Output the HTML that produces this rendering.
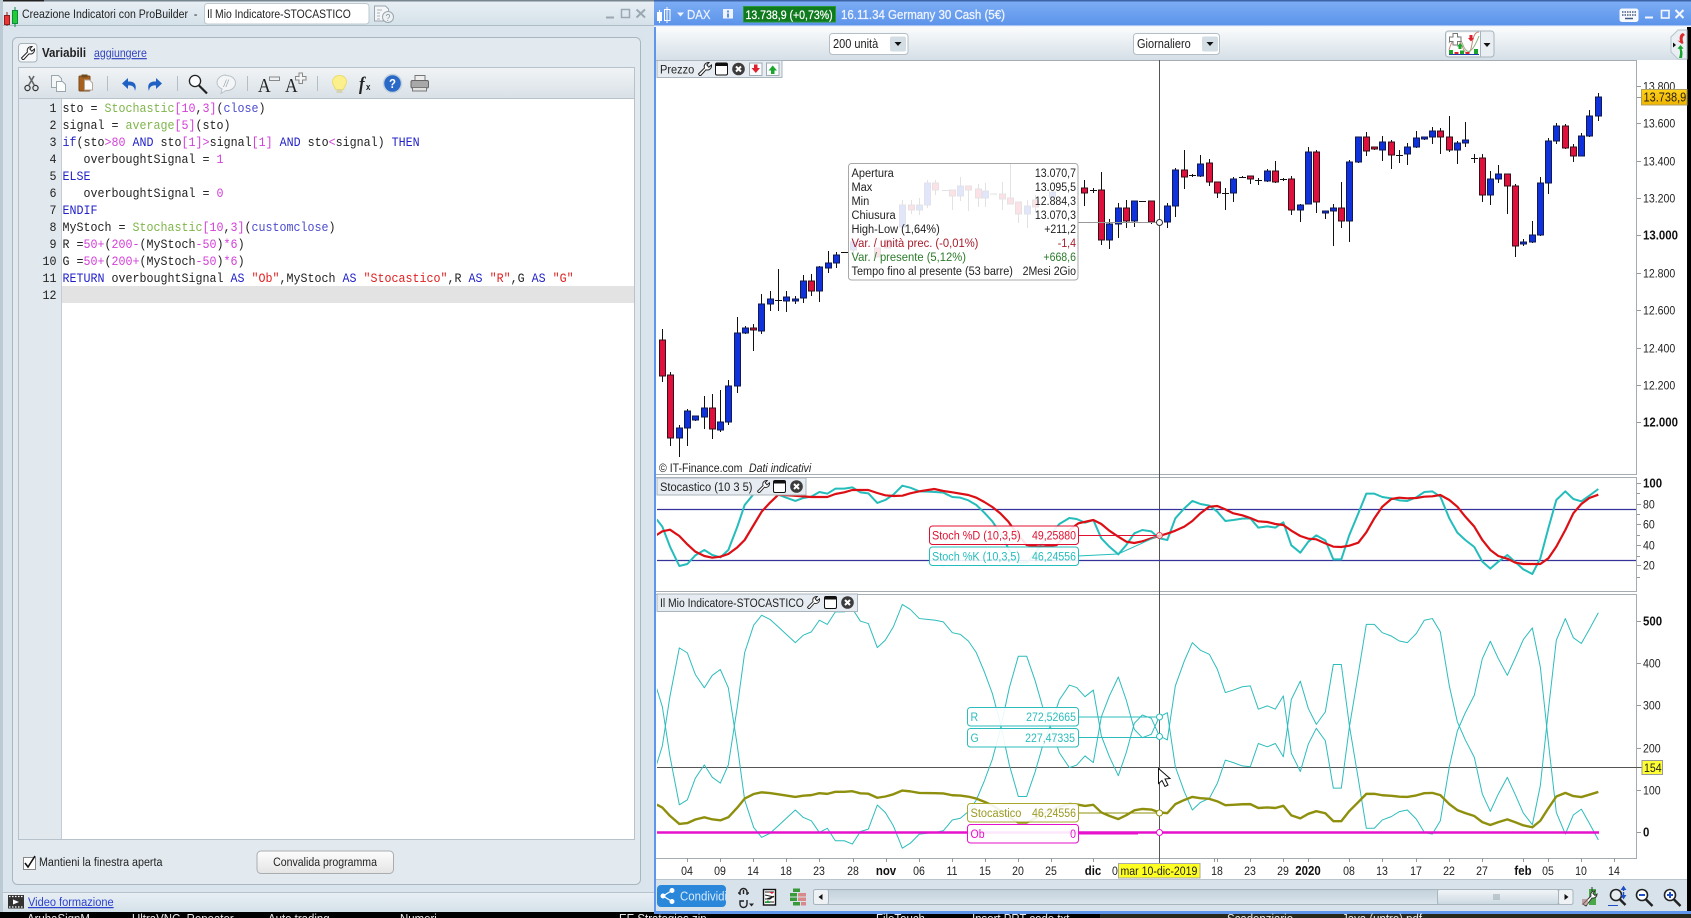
<!DOCTYPE html>
<html><head><meta charset="utf-8"><title>ProBuilder</title>
<style>
html,body{margin:0;padding:0;background:#000;width:1691px;height:918px;overflow:hidden}
svg{display:block}
text{font-family:"Liberation Sans",sans-serif;font-size:12px;fill:#222;transform-box:fill-box;transform-origin:0 50%;transform:scaleX(.88);white-space:pre}
text.c{text-anchor:middle;transform-origin:50% 50%}
text.r{text-anchor:end;transform-origin:100% 50%}
text.bd{font-weight:bold;font-size:13px;fill:#111}
text.m{font-family:"Liberation Mono",monospace;font-size:13px;transform:scaleX(.898)}
text.w{fill:#eef3fd;font-size:12.5px;stroke:#eef3fd;stroke-width:.2}
text.l{transform:scaleX(.92)}
text.v2{transform:scaleX(.935)}
text.u{transform:scaleX(.865)}
.g{fill:#7fb54a}.p{fill:#d33fd8}.v{fill:#4d4dd0}.k{fill:#2222c8}.s{fill:#e02020}
#k,#d{vector-effect:non-scaling-stroke;fill:none;stroke-linejoin:round}
.lab{fill:#fff;fill-opacity:.9;stroke-width:1}
.ic{fill:none;stroke:#333;stroke-width:1.2}
</style></head><body>
<svg xmlns="http://www.w3.org/2000/svg" width="1691" height="918" viewBox="0 0 1691 918">
<defs>
<linearGradient id="tb" x1="0" y1="0" x2="0" y2="1"><stop offset="0" stop-color="#fbfcfd"/><stop offset="1" stop-color="#d5dfe7"/></linearGradient>
<linearGradient id="ltb" x1="0" y1="0" x2="0" y2="1"><stop offset="0" stop-color="#f1f4f6"/><stop offset="1" stop-color="#d9e1e7"/></linearGradient>
<linearGradient id="blue" x1="0" y1="0" x2="0" y2="1"><stop offset="0" stop-color="#7eaef5"/><stop offset="1" stop-color="#5b93ea"/></linearGradient>
<linearGradient id="ttl" x1="0" y1="0" x2="0" y2="1"><stop offset="0" stop-color="#e9f0f5"/><stop offset="1" stop-color="#d5e1e9"/></linearGradient>
<linearGradient id="gold" x1="0" y1="0" x2="0" y2="1"><stop offset="0" stop-color="#ffd21c"/><stop offset="1" stop-color="#eeb400"/></linearGradient>
<linearGradient id="btn" x1="0" y1="0" x2="0" y2="1"><stop offset="0" stop-color="#fdfdfd"/><stop offset="1" stop-color="#e4e4e4"/></linearGradient>
<linearGradient id="trk" x1="0" y1="0" x2="0" y2="1"><stop offset="0" stop-color="#c3d1db"/><stop offset="1" stop-color="#dbe5ec"/></linearGradient>
<linearGradient id="thm" x1="0" y1="0" x2="0" y2="1"><stop offset="0" stop-color="#f3f6f8"/><stop offset="1" stop-color="#cbd8e1"/></linearGradient>
<clipPath id="cp"><rect x="657" y="60" width="979" height="798"/></clipPath>
<clipPath id="cs"><rect x="657" y="478" width="979" height="113"/></clipPath>
<clipPath id="cm"><rect x="657" y="594" width="979" height="264"/></clipPath>
<symbol id="wr" viewBox="0 0 14 14" overflow="visible"><path d="M1.5 13.5L.5 12L6.5 6C5.5 3 7.5.5 11 .5L8.8 3L10.8 5.2L13.5 3C13.8 6.5 11 8.8 8 7.8L2.8 13.5Z" fill="#fff" stroke="#222" stroke-width="1"/></symbol>
<symbol id="win" viewBox="0 0 13 13"><rect x=".5" y=".5" width="12" height="12" rx="1.5" fill="#fff" stroke="#111"/><rect x=".5" y=".5" width="12" height="3" fill="#111"/></symbol>
<symbol id="cl" viewBox="0 0 13 13"><circle cx="6.5" cy="6.5" r="6.3" fill="#3c3c3c"/><path d="M4 4L9 9M9 4L4 9" stroke="#fff" stroke-width="2"/></symbol>
<polyline id="k" points="20,598 37,620 60,680 88,738 112,732 136,706 163,690 187,705 211,712 235,690 262,620 284,555 311,522 335,510 360,515 385,524 409,533 436,543 460,534 484,530 508,516 532,521 556,506 583,506 607,502 631,517 655,520 682,549 706,540 730,524 757,497 781,503 808,514 832,515 856,516 880,518 907,531 931,533 955,541 979,555 1003,578 1027,604 1051,640 1078,690 1105,728 1130,728 1155,699 1178,667 1204,640 1228,612 1258,594 1280,597 1305,608 1330,600 1354,655 1378,680 1405,703 1429,675 1453,640 1477,630 1504,634 1528,655 1552,660 1576,595 1603,565 1627,543 1651,552 1678,557 1702,575 1726,603 1750,600 1777,596 1801,595 1825,623 1852,619 1876,623 1900,607 1924,676 1951,698 1975,665 1999,646 2026,661 2050,718 2074,718 2098,645 2125,580 2149,521 2173,521 2197,531 2224,535 2248,541 2272,543 2299,532 2323,516 2347,514 2371,530 2398,595 2422,638 2446,660 2473,681 2497,725 2521,746 2545,725 2572,705 2596,726 2620,748 2647,762 2671,715 2695,625 2719,540 2746,514 2770,537 2794,544 2818,527 2845,507"/>
<polyline id="d" points="20,645 37,634 60,629 88,648 112,673 136,695 163,708 187,713 211,710 235,702 262,682 284,660 311,615 335,575 360,548 385,524 430,527 484,531 532,531 556,522 583,517 607,510 655,510 682,519 706,526 730,528 757,527 781,520 808,514 853,507 880,513 907,517 955,525 979,533 1003,546 1027,561 1051,580 1075,605 1100,640 1130,675 1172,680 1220,675 1258,630 1285,610 1330,600 1354,612 1378,632 1405,650 1429,665 1453,669 1477,664 1504,655 1528,648 1560,638 1576,632 1603,620 1627,603 1651,580 1678,560 1702,558 1726,568 1750,580 1777,586 1801,594 1825,604 1852,606 1876,612 1900,615 1924,632 1951,648 1975,656 1999,658 2026,670 2050,680 2074,681 2098,677 2125,668 2149,637 2173,595 2197,560 2224,537 2248,533 2272,535 2299,534 2323,530 2347,529 2371,525 2398,540 2422,560 2446,590 2473,620 2497,660 2521,690 2545,708 2572,716 2596,728 2620,732 2647,732 2671,732 2695,715 2719,680 2746,630 2770,580 2794,552 2818,534 2845,524"/>
</defs>

<rect width="1691" height="918" fill="#000"/>
<rect x="1100" y="912" width="591" height="6" fill="#26281c"/>

<!-- LEFT WINDOW -->
<rect x="0" y="0" width="654" height="912" fill="#d9e4ec"/>
<rect x="0" y="0" width="654" height="25" fill="url(#ttl)"/>
<rect x="0" y="0" width="654" height="1.5" fill="#77858f"/>
<rect x="0" y="0" width="44" height="1.5" fill="#222"/>
<rect x="0" y="25" width="654" height="1" fill="#aebcc6"/>
<rect x="0" y="0" width="3" height="912" fill="#bccad4"/>
<path d="M7 12v14" stroke="#822"/>
<path d="M4.500 15.500h5v9h-5z" fill="#e33" stroke="#822"/>
<path d="M15 7v20" stroke="#184"/>
<path d="M12.500 10.500h5v13h-5z" fill="#2c3" stroke="#184"/>
<text x="22" y="18">Creazione Indicatori con ProBuilder  -</text>
<rect x="204.5" y="3.5" width="164.5" height="20.5" rx="3" fill="#fff" stroke="#bcc8d0"/>
<text x="207" y="18" class="u">Il Mio Indicatore-STOCASTICO</text>
<path d="M374.5 6h11l3 3v12h-14z" fill="#f4f6f8" stroke="#9aa6ae"/>
<path d="M377 10h5M377 13h3M377 16h3M377 19h3" stroke="#a8b3ba"/>
<circle cx="388" cy="17" r="5.5" fill="#eef2f5" stroke="#9aa6ae"/>
<text x="388" y="21" class="c" style="font-size:10px;fill:#8a98a2">?</text>
<path d="M606 17.5h8" stroke="#9aa8b2" stroke-width="2"/>
<rect x="621.5" y="9.5" width="8" height="8" fill="none" stroke="#9aa8b2" stroke-width="1.5"/>
<path d="M636.5 9.5l8.5 8M645 9.5l-8.5 8" stroke="#9aa8b2" stroke-width="2"/>

<rect x="12.5" y="37.5" width="628" height="847" rx="5" fill="#e2eaf0" stroke="#a9b6c0"/>
<rect x="18.5" y="43.5" width="18.5" height="18.5" rx="3" fill="#f6f8f9" stroke="#a6b2ba"/>
<use href="#wr" x="21" y="46" width="14" height="14"/>
<text x="42" y="57" class="l" style="font-weight:bold;font-size:12.5px">Variabili</text>
<text x="94" y="57" style="fill:#3344bb;text-decoration:underline">aggiungere</text>

<rect x="18.5" y="67.5" width="616" height="31" fill="url(#ltb)" stroke="#b7c2ca"/>
<!-- toolbar icons -->
<g>
<circle cx="27.5" cy="88" r="2.6" fill="none" stroke="#333" stroke-width="1.2"/><circle cx="35.5" cy="88" r="2.6" fill="none" stroke="#333" stroke-width="1.2"/>
<path d="M28.5 85.5L34 76M34.5 85.5L29 76" stroke="#666" stroke-width="1.6"/>
<path d="M51.5 75.5h7l3 3v9h-10z" fill="#f4f6f8" stroke="#9ba6ad"/><path d="M56.5 81.5h6l3 3v7h-9z" fill="#fbfcfc" stroke="#9ba6ad"/>
<rect x="79" y="76" width="11" height="15" rx="1" fill="#a8621f" stroke="#7d4a18"/><rect x="81.5" y="74.5" width="6" height="3" fill="#6e4a20"/><path d="M84.5 80h5l3 3v7h-8z" fill="#fdfdfd" stroke="#b3a898"/>
<path d="M107.5 76v15M177.5 76v15M247.5 76v15M317.5 76v15" stroke="#b5bec5"/>
<path d="M135 91c2-6 0-10-7-9.500v-3.500l-6 5.500l6 5.500v-3.500c4-.5 6.500 1 7 5.500z" fill="#1f62c4"/>
<path d="M149 91c-2-6 0-10 7-9.500v-3.500l6 5.500l-6 5.500v-3.500c-4-.5-6.500 1-7 5.500z" fill="#1f62c4"/>
<circle cx="195" cy="81" r="5.600" fill="#fbfdfe" stroke="#222" stroke-width="1.300"/><path d="M199 85.500l8 8" stroke="#222" stroke-width="2.200"/>
<path d="M226 75.500c6 0 9.500 3.500 9.500 7.500s-4 8-9.500 7.500l-5 3l1-4.500c-3-1.500-5-4-5-6.500c0-4 4-7.500 8.500-7.500z" fill="#f3f5f6" stroke="#b9c2c8"/>
<text x="226" y="87" class="c" style="font-size:10px;font-style:italic;fill:#9aa5ad">//</text>
<text x="258" y="92" style="font-family:'Liberation Serif',serif;font-size:20px">A</text>
<rect x="269.500" y="77" width="10" height="3.500" fill="#eef1f3" stroke="#888"/>
<text x="285" y="92" style="font-family:'Liberation Serif',serif;font-size:20px">A</text>
<path d="M299 73h3.500v3.500h3.500v3.500h-3.500v3.500h-3.500v-3.500h-3.500v-3.500h3.500z" fill="#f2f4f5" stroke="#888"/>
<path d="M339.500 75.500c4.500 0 7 3 7 6.500c0 3-2.500 4.500-3 7.500h-8c-.5-3-3-4.500-3-7.500c0-3.500 2.500-6.500 7-6.500z" fill="#fbf08c" stroke="#ecdc6c"/><rect x="336.500" y="89.500" width="6" height="3.500" fill="#d6d2b4"/>
<text x="359" y="90" style="font-family:'Liberation Serif',serif;font-size:19px;font-style:italic;font-weight:bold;fill:#222">f</text>
<text x="366" y="90" style="font-size:9px;font-weight:bold">x</text>
<circle cx="392.500" cy="83.500" r="9" fill="#2a69c8" stroke="#c3d2dd" stroke-width="1.500"/>
<text x="392.500" y="88" class="c" style="font-size:13px;font-weight:bold;fill:#fff">?</text>
<rect x="415" y="75.500" width="10" height="5" fill="#eee" stroke="#777"/><rect x="411" y="80.500" width="17.500" height="7.500" rx="1.500" fill="#a8a8a8" stroke="#666"/><rect x="412.500" y="87.500" width="14" height="3.500" fill="#e2e2e2" stroke="#777"/>
</g>

<!-- editor -->
<rect x="18.500" y="98.500" width="616" height="741" fill="#fff" stroke="#b7c2ca"/>
<rect x="19" y="99" width="42.500" height="740" fill="#e1e9ef"/>
<path d="M61.500 99v740" stroke="#c3cdd5"/>
<rect x="62" y="286" width="572" height="17" fill="#e3e3e3"/>
<g>
<text class="m r" x="56.500" y="112">1</text><text class="m r" x="56.500" y="129">2</text><text class="m r" x="56.500" y="146">3</text><text class="m r" x="56.500" y="163">4</text><text class="m r" x="56.500" y="180">5</text><text class="m r" x="56.500" y="197">6</text><text class="m r" x="56.500" y="214">7</text><text class="m r" x="56.500" y="231">8</text><text class="m r" x="56.500" y="248">9</text><text class="m r" x="56.500" y="265">10</text><text class="m r" x="56.500" y="282">11</text><text class="m r" x="56.500" y="299">12</text>
<text class="m" x="62.500" y="112" xml:space="preserve">sto = <tspan class="g">Stochastic</tspan><tspan class="p">[10</tspan>,<tspan class="p">3]</tspan>(<tspan class="v">close</tspan>)</text>
<text class="m" x="62.500" y="129" xml:space="preserve">signal = <tspan class="g">average</tspan><tspan class="p">[5]</tspan>(sto)</text>
<text class="m" x="62.500" y="146" xml:space="preserve"><tspan class="k">if</tspan>(sto<tspan class="p">&gt;80</tspan> <tspan class="k">AND</tspan> sto<tspan class="p">[1]</tspan><tspan class="p">&gt;</tspan>signal<tspan class="p">[1]</tspan> <tspan class="k">AND</tspan> sto<tspan class="p">&lt;</tspan>signal) <tspan class="k">THEN</tspan></text>
<text class="m" x="62.500" y="163" xml:space="preserve">   overboughtSignal = <tspan class="p">1</tspan></text>
<text class="m" x="62.500" y="180" xml:space="preserve"><tspan class="k">ELSE</tspan></text>
<text class="m" x="62.500" y="197" xml:space="preserve">   overboughtSignal = <tspan class="p">0</tspan></text>
<text class="m" x="62.500" y="214" xml:space="preserve"><tspan class="k">ENDIF</tspan></text>
<text class="m" x="62.500" y="231" xml:space="preserve">MyStoch = <tspan class="g">Stochastic</tspan><tspan class="p">[10</tspan>,<tspan class="p">3]</tspan>(<tspan class="v">customclose</tspan>)</text>
<text class="m" x="62.500" y="248" xml:space="preserve">R =<tspan class="p">50+</tspan>(<tspan class="p">200-</tspan>(MyStoch<tspan class="p">-50</tspan>)<tspan class="p">*6</tspan>)</text>
<text class="m" x="62.500" y="265" xml:space="preserve">G =<tspan class="p">50+</tspan>(<tspan class="p">200+</tspan>(MyStoch<tspan class="p">-50</tspan>)<tspan class="p">*6</tspan>)</text>
<text class="m" x="62.500" y="282" xml:space="preserve"><tspan class="k">RETURN</tspan> overboughtSignal <tspan class="k">AS</tspan> <tspan class="s">"Ob"</tspan>,MyStoch <tspan class="k">AS</tspan> <tspan class="s">"Stocastico"</tspan>,R <tspan class="k">AS</tspan> <tspan class="s">"R"</tspan>,G <tspan class="k">AS</tspan> <tspan class="s">"G"</tspan></text>
</g>

<!-- bottom of left window -->
<rect x="23.500" y="857.500" width="12" height="12" fill="#fff" stroke="#888"/>
<path d="M25 863l3 4l7-11" fill="none" stroke="#111" stroke-width="1.600"/>
<text x="39" y="866" style="transform:scaleX(.895)">Mantieni la finestra aperta</text>
<rect x="257" y="851" width="136.500" height="22.500" rx="4" fill="url(#btn)" stroke="#a9adb0"/>
<text x="325" y="866" class="c">Convalida programma</text>
<rect x="3" y="892" width="651" height="20" fill="url(#ttl)"/>
<path d="M3 892.500h651" stroke="#b5c2cb"/>
<rect x="8" y="895" width="16" height="13.500" fill="#333"/>
<path d="M9 896.500h14M9 907h14" stroke="#fff" stroke-width="1.300" stroke-dasharray="1.500 1.500"/>
<path d="M13 899.500l6 2.500l-6 2.500z" fill="#fff"/>
<text x="28" y="906" class="l" style="fill:#2a3fcf;text-decoration:underline">Video formazione</text>

<!-- RIGHT WINDOW -->
<rect x="654" y="0" width="37" height="914" fill="#5f95ea"/>
<rect x="654" y="0" width="1037" height="26" fill="url(#blue)"/>
<rect x="654" y="0" width="1037" height="1.500" fill="#3c64a6"/>
<rect x="654" y="25.500" width="1037" height="1.500" fill="#eef4fc"/>
<rect x="656" y="27" width="1031" height="33" fill="url(#tb)"/>
<rect x="656" y="60" width="1031" height="798" fill="#fff"/>
<rect x="656" y="858" width="1031" height="21" fill="#fff"/>
<rect x="656" y="879" width="1031" height="32" fill="#d7e2eb"/>
<rect x="654" y="911" width="1037" height="3" fill="#5f95ea"/>
<path d="M656 879.500h1031" stroke="#b8c5cf"/>

<!-- title content -->
<rect x="657" y="12" width="5" height="9" fill="#fff"/><path d="M659.500 10v13" stroke="#fff"/>
<rect x="664.500" y="9.500" width="5.500" height="11" fill="none" stroke="#fff"/><path d="M667 7v16" stroke="#fff"/>
<path d="M677 12.500h7l-3.500 4z" fill="#eef3fd"/>
<text x="687" y="19" class="w" style="font-size:13px">DAX</text>
<rect x="723" y="9" width="10" height="9.500" fill="#eef3fd"/><rect x="727" y="10.500" width="2" height="2" fill="#5b8edd"/><rect x="727" y="13.500" width="2" height="4" fill="#5b8edd"/>
<rect x="743.500" y="6.500" width="92" height="15.500" fill="#0f7a1e" stroke="#2a9a36"/>
<text x="745.500" y="19" style="fill:#fff;stroke:#fff;stroke-width:.25;font-size:12px">13.738,9 (+0,73%)</text>
<text x="841" y="19" class="w" style="transform:scaleX(.92);stroke-width:.3">16.11.34 Germany 30 Cash (5€)</text>
<rect x="1619.500" y="8.500" width="19" height="13.500" rx="2.500" fill="#f6f9fd"/>
<path d="M1622 12h14M1622 15h14" stroke="#445a7d" stroke-width="1.500" stroke-dasharray="1.500 1"/><path d="M1625 18.500h8" stroke="#445a7d" stroke-width="1.500"/>
<path d="M1645 17.500h8" stroke="#f2f6fe" stroke-width="2"/>
<rect x="1661.500" y="10.500" width="7.500" height="7.500" fill="none" stroke="#f2f6fe" stroke-width="1.600"/>
<path d="M1675.500 10l8 8M1683.500 10l-8 8" stroke="#f2f6fe" stroke-width="2"/>

<!-- selects -->
<rect x="829.500" y="33.500" width="78.500" height="21" rx="3" fill="#fff" stroke="#b3bec6"/>
<rect x="890" y="36.500" width="16" height="15" rx="2" fill="#d3dde4"/>
<path d="M894.500 42h7l-3.500 4z" fill="#111"/>
<text x="833" y="48" style="font-size:12.500px">200 unità</text>
<rect x="1133.500" y="33.500" width="86" height="21" rx="3" fill="#fff" stroke="#b3bec6"/>
<rect x="1202" y="36.500" width="16" height="15" rx="2" fill="#d3dde4"/>
<path d="M1206.500 42h7l-3.500 4z" fill="#111"/>
<text x="1137" y="48" style="font-size:12.500px">Giornaliero</text>

<!-- indicator button -->
<rect x="1445.500" y="31" width="48.500" height="26" rx="3" fill="#e9eef2" stroke="#a7b4bd"/>
<rect x="1447" y="32.500" width="33" height="23" fill="#fff"/>
<path d="M1480.500 31v26" stroke="#a7b4bd"/>
<path d="M1449 50c4-14 9-14 13-4s8 10 10-2s5-12 7-12" fill="none" stroke="#c98a7a" stroke-width="1"/>
<path d="M1449 43c6-12 10-8 14 2s9 9 16-9" fill="none" stroke="#8ab07a" stroke-width="1"/>
<path d="M1449.500 37h3.500v-3.500h4.500v3.500h3.500v4.500h-3.500v3.500h-4.500v-3.500h-3.500z" fill="#fff" stroke="#777"/>
<path d="M1458.500 49v-2.500h-1.500l3-3.500l3 3.500h-1.500v2.500z" fill="#1ca52c"/>
<path d="M1469.500 35v3h-1.500l3 3.500l3-3.500h-1.500v-3z" fill="#dd2030"/>
<path d="M1449 54.500h30" stroke="#1c3fa8"/>
<rect x="1449" y="50" width="4" height="4" fill="#1ca52c"/><rect x="1454.500" y="52" width="4" height="2" fill="#dd2030"/><rect x="1460" y="50.500" width="4" height="3.500" fill="#1ca52c"/><rect x="1465.500" y="52" width="4" height="2" fill="#dd2030"/><rect x="1474" y="49" width="4" height="5" fill="#1ca52c"/>
<path d="M1483.500 43h7l-3.500 4z" fill="#111"/>
<!-- right tab -->
<path d="M1687 30h-9l-7 7v15l7 7h9z" fill="#e9eff3" stroke="#b7c3cb"/>
<path d="M1677 45l-3-2.500v5z" fill="#111" transform="translate(-1 -0)"/>
<path d="M1683 33c-3 1-4 4-3 8l-2.500-.5l4.500 3.500l1.500-1c-1.500-4-1-7 1.500-8z" fill="#dd2a2a"/>
<path d="M1682 58c.5-3 1-6-.5-9l2-.5l-3-3.500l-3 3.500l2 .5c1 3 .5 6-.5 9z" fill="#1aa52c"/>

<!-- candles -->
<g clip-path="url(#cp)">
<path stroke="#111" stroke-width="1" fill="none" d="M662.500 329V382M670.500 372V446M679.500 425V457M687.500 409V446M695.500 416V421M704.500 396V429M712.500 394V439M720.500 390V432M728.500 380V425M737.500 317V393M745.500 326V334M753.500 324V351M761.500 294V334M770.500 291V311M778.500 269V311M786.500 291V312M795.500 296V304M803.500 275V303M811.500 274V296M819.500 266V302M828.500 251V273M836.500 252V268
M853.500 240V255M902.500 200V232M911.500 200V214M919.500 198V215M927.500 180V208M935.500 180V195M952.500 190V210M960.500 177V201M968.500 186V211M978.500 184V207M985.500 183V207M1002.500 182V210M1010.500 163V203M1018.500 202V223M1027.500 200V228M1035.500 195V212
M1084.500 180V206M1093.500 188V193M1101.500 172V245M1109.500 219V249M1118.500 203V238M1126.500 200V228M1134.500 201V227M1151.500 201V224M1159.500 222V257M1167.500 203V228M1175.500 168V217M1184.500 150V189M1192.500 174V177M1200.500 155V177M1209.500 159V186M1217.500 182V198M1225.500 188V210M1233.500 177V202M1242.500 176V178M1250.500 176V184M1258.500 178V185M1267.500 169V182M1275.500 161V183M1283.500 178V181M1291.500 176V215M1300.500 204V222M1308.500 147V204M1316.500 150V213M1325.500 211V219M1333.500 204V246M1341.500 182V228M1349.500 160V242M1358.500 137V163M1366.500 132V156M1374.500 147V150M1382.500 136V161M1391.500 140V169M1399.500 150V163M1407.500 143V165M1416.500 131V148M1424.500 137V140M1432.500 127V144M1440.500 128V154M1449.500 116V152M1457.500 141V164M1465.500 122V147M1474.500 154V163M1482.500 154V202M1490.500 171V205M1498.500 165V183M1507.500 174V214M1515.500 184V257M1523.500 239V246M1532.500 221V243M1540.500 177V236M1548.500 138V194M1556.500 123V144M1565.500 124V149M1573.500 144V162M1581.500 133V156M1589.500 110V137M1598.500 93V121
M775 300.500h7M841 252.500h7M942 190.500h7M990 194h7M1090 190.500h7M1139 201.500h7M1189 175.500h7M1222 193.500h7M1239 177.500h7M1255 180.500h7M1280 179.500h7M1396 155.500h7M1471 158.500h7"/>
<path fill="#0f32dc" stroke="#121a50" stroke-width="1" d="M676.500 428h6v10h-6zM684.500 411h6v17h-6zM692.500 416h6v4h-6zM701.500 408h6v9h-6zM717.500 422h6v8h-6zM725.500 386h6v36h-6zM734.500 333h6v53h-6zM742.500 328h6v5h-6zM758.500 304h6v27h-6zM767.500 299h6v5h-6zM783.500 297h6v4h-6zM792.500 299h6v2h-6zM800.500 281h6v17h-6zM816.500 267h6v24h-6zM825.500 263h6v5h-6zM833.500 255h6v8h-6zM850.500 242h6v8h-6zM899.500 205h6v22h-6zM916.500 205h6v5h-6zM924.500 183h6v22h-6zM957.500 186h6v10h-6zM982.500 191h6v7h-6zM1024.500 206h6v8h-6zM1049.500 192h6v5h-6zM1106.500 224h6v16h-6zM1115.500 208h6v16h-6zM1131.500 201h6v20h-6zM1164.500 206h6v16h-6zM1172.500 170h6v36h-6zM1197.500 164h6v12h-6zM1230.500 179h6v14h-6zM1264.500 171h6v10h-6zM1297.500 205h6v5h-6zM1305.500 152h6v52h-6zM1322.500 211h6v2h-6zM1330.500 208h6v3h-6zM1346.500 162h6v59h-6zM1355.500 137h6v25h-6zM1379.500 142h6v8h-6zM1404.500 147h6v7h-6zM1413.500 138h6v9h-6zM1421.500 137h6v2h-6zM1429.500 131h6v6h-6zM1454.500 143h6v7h-6zM1462.500 140h6v3h-6zM1487.500 179h6v16h-6zM1495.500 174h6v5h-6zM1520.500 242h6v2h-6zM1529.500 235h6v7h-6zM1537.500 183h6v52h-6zM1545.500 141h6v42h-6zM1553.500 126h6v15h-6zM1578.500 136h6v20h-6zM1586.500 116h6v20h-6zM1595.500 97h6v19h-6z"/>
<path fill="#e0103c" stroke="#33101a" stroke-width="1" d="M659.500 340h6v36h-6zM667.500 375h6v63h-6zM709.500 408h6v21h-6zM750.500 328h6v2h-6zM808.500 281h6v10h-6zM874.500 248h6v9h-6zM884.500 240h6v8h-6zM908.500 205h6v5h-6zM932.500 183h6v7h-6zM949.500 190h6v6h-6zM965.500 186h6v4h-6zM975.500 189h6v9h-6zM999.500 194h6v5h-6zM1007.500 198h6v6h-6zM1015.500 202h6v12h-6zM1032.500 200h6v7h-6zM1081.500 188h6v5h-6zM1098.500 190h6v50h-6zM1123.500 208h6v13h-6zM1148.500 201h6v21h-6zM1181.500 170h6v7h-6zM1206.500 163h6v19h-6zM1214.500 182h6v11h-6zM1247.500 176h6v3h-6zM1272.500 171h6v11h-6zM1288.500 179h6v31h-6zM1313.500 152h6v50h-6zM1338.500 208h6v13h-6zM1363.500 137h6v14h-6zM1371.500 147h6v2h-6zM1388.500 142h6v13h-6zM1437.500 131h6v6h-6zM1446.500 137h6v13h-6zM1479.500 158h6v37h-6zM1504.500 174h6v12h-6zM1512.500 186h6v60h-6zM1562.500 126h6v22h-6zM1570.500 147h6v9h-6z"/>
</g>

<!-- pane separators & axes -->
<path d="M656 60.500h981M656 474.500h981M656 477.500h981M656 591.500h981M656 594.500h981M656 858.500h981" stroke="#a5adb3" fill="none"/>
<path d="M1636.500 60v798" stroke="#a5adb3"/>
<rect x="656" y="475" width="981" height="2" fill="#fff"/>
<rect x="656" y="592" width="981" height="2" fill="#fff"/>
<!-- ticks -->
<path stroke="#999" fill="none" d="M1637 86.500h4M1637 123.500h4M1637 161.500h4M1637 198.500h4M1637 235.500h4M1637 273.500h4M1637 310.500h4M1637 348.500h4M1637 385.500h4M1637 422.500h4M1637 97.500h4
M1637 483.500h4M1637 493.500h3M1637 504.500h4M1637 514.500h3M1637 524.500h4M1637 535.500h3M1637 545.500h4M1637 556.500h3M1637 565.500h4M1637 577.500h3
M1637 621.500h4M1637 663.500h4M1637 705.500h4M1637 748.500h4M1637 790.500h4M1637 832.500h4
M687.500 858v4M720.500 858v4M753.500 858v4M786.500 858v4M819.500 858v4M853.500 858v4M886.500 858v4M919.500 858v4M952.500 858v4M985.500 858v4M1018.500 858v4M1051.500 858v4M1093.500 858v4M1214.500 858v4M1217.500 858v4M1250.500 858v4M1283.500 858v4M1308.500 858v4M1349.500 858v4M1382.500 858v4M1416.500 858v4M1449.500 858v4M1482.500 858v4M1523.500 858v4M1548.500 858v4M1581.500 858v4M1614.500 858v4"/>

<!-- crosshair -->
<path d="M1159.500 60V863M657 767.500H1642" stroke="#555" stroke-width="1"/>
<path d="M1078 222.500H1159" stroke="#999"/>

<!-- stochastic -->
<g clip-path="url(#cs)">
<path d="M657 509.500H1636M657 560.500H1636" stroke="#34349a" stroke-width="1.200"/>
<use href="#k" transform="matrix(.33333 0 0 .33333 650 320)" stroke="#24bdbb" stroke-width="2"/>
<use href="#d" transform="matrix(.33333 0 0 .33333 650 320)" stroke="#dc0f14" stroke-width="2.200"/>
</g>

<!-- indicator pane -->
<g clip-path="url(#cm)">
<use href="#k" transform="matrix(.33333 0 0 -.83127 650 1261.36)" stroke="#2dbcbc" stroke-width="1"/>
<use href="#k" transform="matrix(.33333 0 0 .83127 650 191.29)" stroke="#2dbcbc" stroke-width="1"/>
<path d="M657 832.500H1599" stroke="#e611cc" stroke-width="2.400"/>
<use href="#k" transform="matrix(.33333 0 0 .13854 650 721.69)" stroke="#8f8f0e" stroke-width="2.400"/>
</g>

<!-- tooltip -->
<rect x="848.500" y="163.500" width="229.500" height="116.500" rx="3" fill="#fff" fill-opacity=".88" stroke="#a8a8a8"/>
<g>
<text x="851.500" y="177" class="l">Apertura</text><text class="r" x="1076" y="177">13.070,7</text>
<text x="851.500" y="191" class="l">Max</text><text class="r" x="1076" y="191">13.095,5</text>
<text x="851.500" y="205" class="l">Min</text><text class="r" x="1076" y="205">12.884,3</text>
<text x="851.500" y="219" class="l">Chiusura</text><text class="r" x="1076" y="219">13.070,3</text>
<text x="851.500" y="233" class="l">High-Low (1,64%)</text><text class="r" x="1076" y="233">+211,2</text>
<text x="851.500" y="247" class="v2" style="fill:#a81c2c">Var. / unità prec. (-0,01%)</text><text class="r" x="1076" y="247" style="fill:#a81c2c">-1,4</text>
<text x="851.500" y="261" class="v2" style="fill:#2a7a2a">Var. / presente (5,12%)</text><text class="r" x="1076" y="261" style="fill:#2a7a2a">+668,6</text>
<text x="851.500" y="275" style="transform:scaleX(.91)">Tempo fino al presente (53 barre)</text><text class="r" x="1076" y="275">2Mesi 2Gio</text>
</g>
<circle cx="1159.500" cy="222.500" r="3" fill="#fff" stroke="#333"/>
<text x="659" y="472">© IT-Finance.com</text>
<text x="749" y="472" style="font-style:italic">Dati indicativi</text>

<!-- stoch labels -->
<path d="M1078 535.500H1159" stroke="#e01030"/>
<path d="M1078 556l40-2l40-18" stroke="#24bdbb" fill="none"/>
<rect x="929.500" y="526" width="149" height="18.500" rx="3" class="lab" stroke="#e01030"/>
<text x="932" y="539.500" style="fill:#e01030;transform:scaleX(.905)">Stoch %D (10,3,5)</text><text class="r" x="1076" y="539.500" style="fill:#e01030">49,25880</text>
<rect x="929.500" y="547" width="149" height="18.500" rx="3" class="lab" stroke="#24bdbb"/>
<text x="932" y="560.500" style="fill:#24bdbb;transform:scaleX(.905)">Stoch %K (10,3,5)</text><text class="r" x="1076" y="560.500" style="fill:#24bdbb">46,24556</text>
<circle cx="1159.500" cy="535.500" r="3" fill="#fff" fill-opacity=".7" stroke="#e04a50"/>

<!-- indicator labels -->
<path d="M1078 717H1159M1078 737.500H1159" stroke="#2dbcbc"/>
<path d="M1078 813H1159" stroke="#8f8f0e"/>
<path d="M1078 834h60" stroke="#e611cc"/>
<rect x="967.500" y="707.500" width="111" height="18.500" rx="3" class="lab" stroke="#2dbcbc"/>
<text x="970.500" y="721" style="fill:#2dbcbc">R</text><text class="r" x="1076" y="721" style="fill:#2dbcbc">272,52665</text>
<rect x="967.500" y="728.500" width="111" height="18.500" rx="3" class="lab" stroke="#2dbcbc"/>
<text x="970.500" y="742" style="fill:#2dbcbc">G</text><text class="r" x="1075" y="742" style="fill:#2dbcbc">227,47335</text>
<rect x="967.500" y="803.500" width="111" height="18.500" rx="3" class="lab" stroke="#a8a830"/>
<text x="970.500" y="817" class="l" style="fill:#9a9a20">Stocastico</text><text class="r" x="1076" y="817" style="fill:#9a9a20">46,24556</text>
<rect x="967.500" y="824.500" width="111" height="18.500" rx="3" class="lab" stroke="#e611cc"/>
<text x="970.500" y="838" style="fill:#e611cc">Ob</text><text class="r" x="1076" y="838" style="fill:#e611cc">0</text>
<g fill="#fff" stroke-width="1">
<circle cx="1159.500" cy="717" r="3" stroke="#2dbcbc"/><circle cx="1159.500" cy="736.500" r="3" stroke="#2dbcbc"/><circle cx="1159.500" cy="813" r="3" stroke="#8f8f0e"/><circle cx="1159.500" cy="832.500" r="3" stroke="#e611cc"/>
</g>

<!-- pane headers -->
<rect x="657" y="60.500" width="125" height="17" fill="#e6ecf1" stroke="#aab4bc"/>
<text x="660" y="73.500" class="l">Prezzo</text>
<use href="#wr" x="698" y="62" width="14" height="14"/>
<use href="#win" x="715" y="62.500" width="13" height="13"/>
<use href="#cl" x="732" y="62.500" width="13" height="13"/>
<rect x="749.500" y="63" width="12.500" height="12.500" fill="#fbfcfd" stroke="#9fabb4"/><path d="M754 64.500h3.500v3.500h2.500l-4.200 5l-4.300-5h2.500z" fill="#dd2030"/>
<rect x="766.500" y="63" width="12.500" height="12.500" fill="#fbfcfd" stroke="#9fabb4"/><path d="M771 74v-3.500h-2.500l4.200-5l4.300 5h-2.500v3.500z" fill="#1ca52c"/>

<rect x="657" y="478" width="149" height="17" fill="#e6ecf1" stroke="#aab4bc"/>
<text x="660" y="491" style="transform:scaleX(.925)">Stocastico (10 3 5)</text>
<use href="#wr" x="757" y="479.500" width="13" height="14"/>
<use href="#win" x="773" y="480" width="13" height="13"/>
<use href="#cl" x="790" y="480" width="13" height="13"/>

<rect x="657" y="594" width="200.500" height="17.500" fill="#e6ecf1" stroke="#aab4bc"/>
<text x="660" y="607" class="u">Il Mio Indicatore-STOCASTICO</text>
<use href="#wr" x="807" y="595.500" width="13" height="14"/>
<use href="#win" x="824" y="596" width="13" height="13"/>
<use href="#cl" x="841" y="596" width="13" height="13"/>

<!-- price axis labels -->
<g>
<text x="1643" y="90.500">13.800</text>
<text x="1643" y="127.500">13.600</text><text x="1643" y="165.500">13.400</text><text x="1643" y="202.500">13.200</text>
<text x="1643" y="239.500" class="bd">13.000</text><text x="1643" y="277.500">12.800</text><text x="1643" y="314.500">12.600</text><text x="1643" y="352.500">12.400</text><text x="1643" y="389.500">12.200</text>
<text x="1643" y="426.500" class="bd">12.000</text>
<rect x="1641.500" y="89.500" width="45.500" height="15.500" fill="url(#gold)" stroke="#b0a060"/>
<text x="1643.500" y="101.500" style="font-size:12.500px;fill:#2a2010">13.738,9</text>
<text x="1643" y="487.500" class="bd">100</text><text x="1643" y="508.500">80</text><text x="1643" y="528.500">60</text><text x="1643" y="549.500">40</text><text x="1643" y="569.500">20</text>
<text x="1643" y="625.500" class="bd">500</text><text x="1643" y="667.500">400</text><text x="1643" y="709.500">300</text><text x="1643" y="752.500">200</text>
<text x="1643" y="794.500">100</text><text x="1643" y="836.500" class="bd">0</text>
<rect x="1642" y="760.500" width="20.500" height="14" fill="#ffff33" stroke="#999"/>
<text x="1644" y="772" >154</text>
</g>

<!-- x axis labels -->
<g>
<text class="c" x="687" y="875">04</text><text class="c" x="720" y="875">09</text><text class="c" x="753" y="875">14</text><text class="c" x="786" y="875">18</text><text class="c" x="819" y="875">23</text><text class="c" x="853" y="875">28</text>
<text class="c bd" x="886" y="875">nov</text>
<text class="c" x="919" y="875">06</text><text class="c" x="952" y="875">11</text><text class="c" x="985" y="875">15</text><text class="c" x="1018" y="875">20</text><text class="c" x="1051" y="875">25</text>
<text class="c bd" x="1093" y="875">dic</text>
<text x="1112" y="875">0</text>
<rect x="1118.500" y="863.500" width="81.500" height="14.500" fill="#ffff22" stroke="#aaa"/>
<text x="1120.500" y="875">mar 10-dic-2019</text>
<text class="c" x="1217" y="875">18</text><text class="c" x="1250" y="875">23</text><text class="c" x="1283" y="875">29</text>
<text class="c bd" x="1308" y="875">2020</text>
<text class="c" x="1349" y="875">08</text><text class="c" x="1382" y="875">13</text><text class="c" x="1416" y="875">17</text><text class="c" x="1449" y="875">22</text><text class="c" x="1482" y="875">27</text>
<text class="c bd" x="1523" y="875">feb</text>
<text class="c" x="1548" y="875">05</text><text class="c" x="1581" y="875">10</text><text class="c" x="1614" y="875">14</text>
</g>

<!-- mouse cursor -->
<path d="M1158.500 768.500V783.500L1162 780.500L1165 786.500L1168 785L1165 779L1170 778.500Z" fill="#fff" stroke="#111"/>

<!-- bottom toolbar -->
<rect x="657" y="885" width="69" height="22" rx="4" fill="#2b87d9"/>
<circle cx="663" cy="896" r="2.500" fill="#fff"/><circle cx="672" cy="890.500" r="2.500" fill="#fff"/><circle cx="672" cy="901.500" r="2.500" fill="#fff"/>
<path d="M672 890.500L663 896L672 901.500" fill="none" stroke="#fff" stroke-width="1.200"/>
<text x="680" y="900.500" style="fill:#d6eafb;font-size:13px">Condividi</text>
<g fill="none" stroke="#222" stroke-width="1.400">
<path d="M740 895v-3a3.500 3.500 0 0 1 7 0v3M738 893h2M747 893h2M743.500 890v4"/>
<path d="M747 900v4a3.500 3.500 0 0 1-7 0v-3h4"/>
</g>
<path d="M749 903.500h5l-2.500 3z" fill="#222"/>
<rect x="763.500" y="889.500" width="12" height="15.500" fill="#fff" stroke="#111" stroke-width="1.400"/>
<path d="M765 892h9M765 895l9 2M765 899h5l4-3M765 902h9" stroke="#222"/>
<path d="M765 903l3-3l2 3z" fill="#1ca52c"/><path d="M769 892l3 2l2-2z" fill="#dd2030"/>
<rect x="790" y="893" width="7" height="3.500" fill="#3a9a3a"/><rect x="793" y="888.500" width="7" height="3.500" fill="#3a9a3a"/><rect x="790" y="897.500" width="7" height="3.500" fill="#3a9a3a"/><rect x="793" y="902" width="7" height="3.500" fill="#3a9a3a"/>
<rect x="798" y="893" width="8" height="3.500" fill="#d88a8a"/><rect x="798" y="897.500" width="8" height="3.500" fill="#d88a8a"/><rect x="801" y="902" width="5" height="3.500" fill="#d88a8a"/>
<rect x="813.500" y="889.500" width="759.500" height="15" rx="2" fill="url(#trk)" stroke="#a8b5be"/>
<rect x="813.500" y="889.500" width="15" height="15" rx="2" fill="#eef2f5" stroke="#a8b5be"/>
<path d="M822.500 894v6l-4-3z" fill="#111"/>
<rect x="1437.500" y="889.500" width="121" height="15" rx="2" fill="url(#thm)" stroke="#a8b5be"/>
<path d="M1493 895h7M1493 897h7M1493 899h7" stroke="#98a5ae"/>
<rect x="1558.500" y="889.500" width="14.500" height="15" rx="2" fill="#eef2f5" stroke="#a8b5be"/>
<path d="M1564.500 894v6l4-3z" fill="#111"/>
<rect x="1589" y="889" width="7" height="16" fill="#4aa84a"/>
<path d="M1592 887v4M1586 906l-3-2L1591 896c-1-3 1-5 4-5l-2 2.500l2 2l2-1.500c0 3-2.500 4.500-5 4z" fill="#fff" stroke="#333"/>
<rect x="1582" y="899" width="6" height="6" fill="#a77" opacity=".6"/>
<circle cx="1616" cy="895" r="5.500" fill="#e6ecf0" stroke="#222" stroke-width="1.600"/><path d="M1620 899.500l5.500 5.500" stroke="#222" stroke-width="2.500"/>
<path d="M1623.500 891v-3M1623.500 897v-5" stroke="#1c4fc8" stroke-width="1.400"/><path d="M1621.500 889.500l2-3l2 3zM1621.500 895.500l2 3l2-3zM1608 905.500h10" fill="#1c4fc8" stroke="#1c4fc8"/>
<circle cx="1642" cy="895" r="5.500" fill="#fff" stroke="#222" stroke-width="1.600"/><path d="M1639 895h6" stroke="#1c4fc8" stroke-width="2"/><path d="M1646 899.500l6.500 6.500" stroke="#222" stroke-width="2.500"/>
<circle cx="1670" cy="895" r="5.500" fill="#fff" stroke="#222" stroke-width="1.600"/><path d="M1667 895h6M1670 892v6" stroke="#1c4fc8" stroke-width="2"/><path d="M1674 899.500l6.500 6.500" stroke="#222" stroke-width="2.500"/>

<!-- desktop strip -->
<g style="clip-path:none">
<text x="27" y="923" style="fill:#e8e8e8;font-size:13px">AruhaSignM</text>
<text x="132" y="923" style="fill:#e8e8e8;font-size:13px">UltraVNC  Repeater</text>
<text x="268" y="923" style="fill:#e8e8e8;font-size:13px">Auto trading</text>
<text x="400" y="923" style="fill:#e8e8e8;font-size:13px">Numeri</text>
<text x="619" y="923" style="fill:#e8e8e8;font-size:13px">EE Strategies.zip</text>
<text x="876" y="923" style="fill:#e8e8e8;font-size:13px">FileTouch</text>
<text x="972" y="923" style="fill:#e8e8e8;font-size:13px">Insert PRT code.txt</text>
<text x="1227" y="923" style="fill:#e8e8e8;font-size:13px">Scadenziario</text>
<text x="1342" y="923" style="fill:#e8e8e8;font-size:13px">Java (untro).pdf</text>
</g>
</svg>
</body></html>
